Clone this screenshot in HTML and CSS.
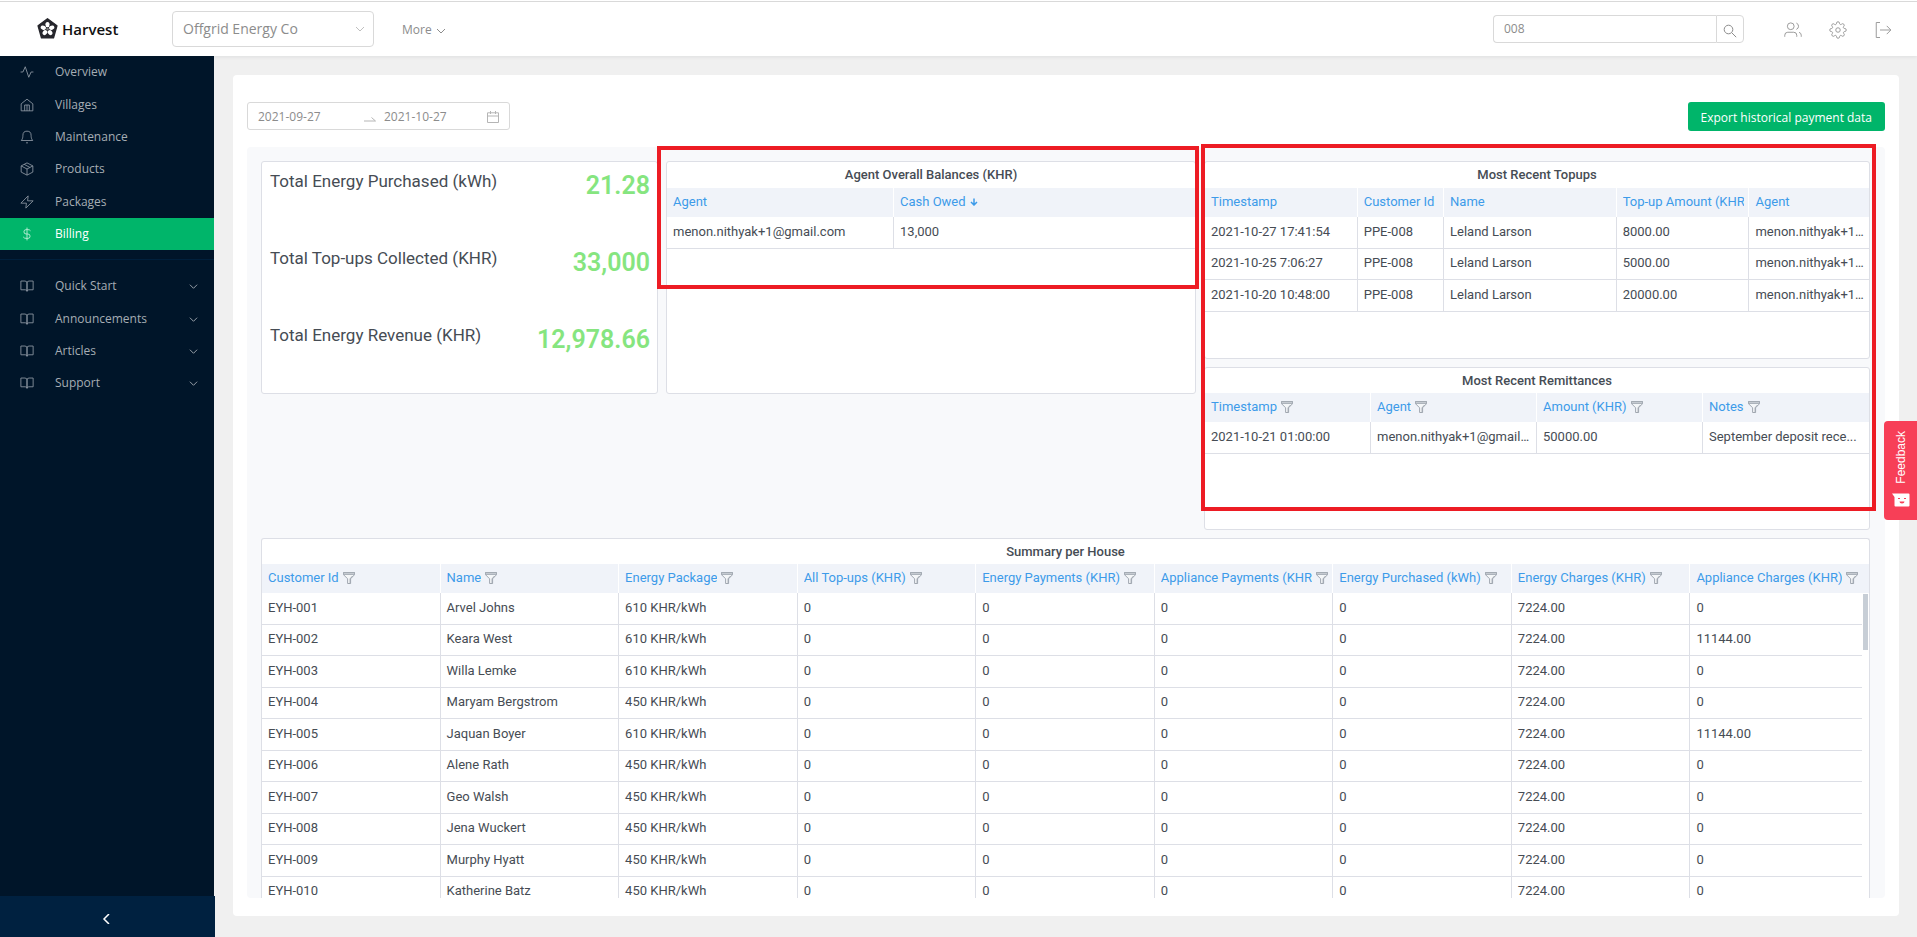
FILE: index.html
```html
<!DOCTYPE html>
<html lang="en">
<head>
<meta charset="utf-8">
<title>Harvest - Billing</title>
<link rel="stylesheet" href="styles.css">
</head>
<body>
<svg class="sprite" width="0" height="0" aria-hidden="true">
  <defs>
    <symbol id="i-filter" viewBox="0 0 12 12">
      <path d="M.5.5h11v2.200L7.600 6.800v4.700H4.600V6.800L.5 2.700z" fill="#f4f6f8" stroke="#a0a7b0" stroke-linejoin="round"/>
      <path d="M.5.5h11v2H.5z" fill="#c5cad1" stroke="#a0a7b0" stroke-width=".8"/>
      <path d="M6.600 6.800v4.600h.9V6.800l2.700-2.900H9z" fill="#a0a7b0"/>
    </symbol>
    <symbol id="i-book" viewBox="0 0 24 24"><path d="M1.500 3.500h7A3.500 3.500 0 0 1 12 7v14a3 3 0 0 0-3-2.500H1.500zM22.500 3.500h-7A3.500 3.500 0 0 0 12 7v14a3 3 0 0 1 3-2.500h7.500z"/></symbol>
    <symbol id="i-down" viewBox="0 0 10 10"><path d="M1 3l4 4 4-4"/></symbol>
  </defs>
</svg>

<header class="topbar">
  <a class="brand" href="#">
    <svg class="brand-mark" viewBox="0 0 21 21" aria-hidden="true">
      <path d="M10.500.8l9.400 6.900-3.400 12.100H4.500L1.100 7.700z" fill="#26262c" stroke="#26262c" stroke-width="1.400" stroke-linejoin="round"/>
      <g fill="#fff">
        <ellipse cx="10.500" cy="6.600" rx="2.100" ry="2.700"/>
        <ellipse cx="10.500" cy="6.600" rx="2.100" ry="2.700" transform="rotate(72 10.500 11)"/>
        <ellipse cx="10.500" cy="6.600" rx="2.100" ry="2.700" transform="rotate(144 10.500 11)"/>
        <ellipse cx="10.500" cy="6.600" rx="2.100" ry="2.700" transform="rotate(216 10.500 11)"/>
        <ellipse cx="10.500" cy="6.600" rx="2.100" ry="2.700" transform="rotate(288 10.500 11)"/>
      </g>
      <circle cx="10.500" cy="11" r="1.300" fill="#777"/>
    </svg>
    <span>Harvest</span>
  </a>
  <div class="org">
    <select class="org-select" aria-label="Organisation"><option>Offgrid Energy Co</option></select>
    <svg class="org-arrow" aria-hidden="true"><use href="#i-down"/></svg>
  </div>
  <button class="more" type="button">More <svg class="more-arrow" aria-hidden="true"><use href="#i-down"/></svg></button>
  <form class="search">
    <input class="search-input" type="text" value="008" aria-label="Search">
    <button class="search-btn" type="button" aria-label="Search">
      <svg viewBox="0 0 14 14"><circle cx="5.500" cy="5.500" r="4.300"/><path d="M8.700 8.700l4.500 4.500"/></svg>
    </button>
  </form>
  <nav class="tools">
    <button type="button" aria-label="Users"><svg viewBox="0 0 24 24"><circle cx="9" cy="7" r="4.500"/><path d="M1 21v-2a4 4 0 0 1 4-4h8a4 4 0 0 1 4 4v2M16.500 2.800a4.500 4.500 0 0 1 0 8.400M23 21v-2a4 4 0 0 0-3-3.900"/></svg></button>
    <button type="button" aria-label="Settings"><svg viewBox="0 0 24 24"><circle cx="12" cy="12" r="3"/><path d="M19.400 15a1.650 1.650 0 0 0 .33 1.820l.06.06a2 2 0 1 1-2.830 2.830l-.06-.06a1.650 1.650 0 0 0-2.800 1.170V21a2 2 0 0 1-4 0v-.09a1.650 1.650 0 0 0-2.900-1.200l-.06.06a2 2 0 1 1-2.830-2.830l.06-.06a1.650 1.650 0 0 0-1.170-2.800H3a2 2 0 0 1 0-4h.09a1.650 1.650 0 0 0 1.200-2.900l-.06-.06a2 2 0 1 1 2.830-2.830l.06.06a1.650 1.650 0 0 0 2.880-1.350V3a2 2 0 0 1 4 0v.09a1.650 1.650 0 0 0 2.800 1.200l.06-.06a2 2 0 1 1 2.830 2.830l-.06.06a1.650 1.650 0 0 0 1.370 2.880H21a2 2 0 0 1 0 4h-.09a1.650 1.650 0 0 0-1.510 1z"/></svg></button>
    <button type="button" aria-label="Log out"><svg viewBox="0 0 24 24"><path d="M8 2H3v20h5M8 12h14M17 6.500l5.500 5.500-5.500 5.500"/></svg></button>
  </nav>
</header>

<div class="body">
  <aside class="sidebar">
    <ul class="menu">
      <li><a href="#"><svg viewBox="0 0 24 24"><path d="M1 12h4l4-9 6 18 4-9h4"/></svg>Overview</a></li>
      <li><a href="#"><svg viewBox="0 0 24 24"><path d="M2 10l10-8 10 8v12H2zM8 22V12h8v10M12 12v10"/></svg>Villages</a></li>
      <li><a href="#"><svg viewBox="0 0 24 24"><path d="M19 9A7 7 0 0 0 5 9c0 7-3 9-3 9h20s-3-2-3-9M10.300 22h3.400"/></svg>Maintenance</a></li>
      <li><a href="#"><svg viewBox="0 0 24 24"><path d="M12 1.500l10 5.200v10.600l-10 5.200-10-5.200V6.700zM2 6.700l10 5.300 10-5.300M12 12v10.500M7 4l10 5.300"/></svg>Products</a></li>
      <li><a href="#"><svg viewBox="0 0 24 24"><path d="M14 1.500L1.500 14h9.500l-1 8.500L22.500 10H13z"/></svg>Packages</a></li>
      <li><a class="active" href="#"><svg viewBox="0 0 24 24"><path d="M12 1v22M18 6.500C17 5 15.500 4.500 13.500 4.500h-3a3.700 3.700 0 0 0 0 7.500h3a3.700 3.700 0 0 1 0 7.500h-3c-2.500 0-4-1-5-2.500"/></svg>Billing</a></li>
    </ul>
    <ul class="menu menu-more">
      <li><a href="#"><svg><use href="#i-book"/></svg>Quick Start<svg class="caret"><use href="#i-down"/></svg></a></li>
      <li><a href="#"><svg><use href="#i-book"/></svg>Announcements<svg class="caret"><use href="#i-down"/></svg></a></li>
      <li><a href="#"><svg><use href="#i-book"/></svg>Articles<svg class="caret"><use href="#i-down"/></svg></a></li>
      <li><a href="#"><svg><use href="#i-book"/></svg>Support<svg class="caret"><use href="#i-down"/></svg></a></li>
    </ul>
    <button class="collapse" type="button" aria-label="Collapse menu"><svg viewBox="0 0 10 10"><path d="M7 0L2 5l5 5"/></svg></button>
  </aside>

  <main class="content">
    <div class="card">
      <div class="toolbar">
        <div class="range">
          <input type="text" value="2021-09-27" aria-label="Start date">
          <svg class="range-arrow" viewBox="0 0 12 6"><path d="M0 5h11.500L7.500 1.500"/></svg>
          <input type="text" value="2021-10-27" aria-label="End date">
          <svg class="range-cal" viewBox="0 0 12 12"><path d="M.5 1.800h11v9.700H.5zM.5 5h11M3.500 0v3M8.500 0v3"/></svg>
        </div>
        <button class="export" type="button">Export historical payment data</button>
      </div>

      <div class="dashboard">
        <div class="upper">
          <section class="panel stats">
            <div class="stat"><span>Total Energy Purchased (kWh)</span><strong>21.28</strong></div>
            <div class="stat"><span>Total Top-ups Collected (KHR)</span><strong>33,000</strong></div>
            <div class="stat"><span>Total Energy Revenue (KHR)</span><strong>12,978.66</strong></div>
          </section>

          <div class="marked marked-agent">
            <section class="panel agent">
              <h2>Agent Overall Balances (KHR)</h2>
              <table>
                <colgroup><col class="w-agent"><col></colgroup>
                <thead><tr><th><div>Agent</div></th><th><div>Cash Owed <svg class="sort" viewBox="0 0 8 8"><path d="M4 .5v6.500M1 4l3 3 3-3"/></svg></div></th></tr></thead>
                <tbody><tr><td>menon.nithyak+1@gmail.com</td><td>13,000</td></tr></tbody>
              </table>
            </section>
          </div>

          <div class="marked marked-recent">
            <section class="panel topups">
              <h2>Most Recent Topups</h2>
              <table>
                <colgroup><col class="w-time"><col class="w-cust"><col class="w-name"><col class="w-amount"><col></colgroup>
                <thead><tr><th><div>Timestamp</div></th><th><div>Customer Id</div></th><th><div>Name</div></th><th><div><span>Top-up Amount (KHR</span></div></th><th><div>Agent</div></th></tr></thead>
                <tbody>
                  <tr><td>2021-10-27 17:41:54</td><td>PPE-008</td><td>Leland Larson</td><td>8000.00</td><td>menon.nithyak+1...</td></tr>
                  <tr><td>2021-10-25 7:06:27</td><td>PPE-008</td><td>Leland Larson</td><td>5000.00</td><td>menon.nithyak+1...</td></tr>
                  <tr><td>2021-10-20 10:48:00</td><td>PPE-008</td><td>Leland Larson</td><td>20000.00</td><td>menon.nithyak+1...</td></tr>
                </tbody>
              </table>
            </section>
            <section class="panel remittances">
              <h2>Most Recent Remittances</h2>
              <table>
                <thead><tr><th><div><span>Timestamp</span><svg><use href="#i-filter"/></svg></div></th><th><div><span>Agent</span><svg><use href="#i-filter"/></svg></div></th><th><div><span>Amount (KHR)</span><svg><use href="#i-filter"/></svg></div></th><th><div><span>Notes</span><svg><use href="#i-filter"/></svg></div></th></tr></thead>
                <tbody><tr><td>2021-10-21 01:00:00</td><td>menon.nithyak+1@gmail....</td><td>50000.00</td><td>September deposit rece...</td></tr></tbody>
              </table>
            </section>
          </div>
        </div>

        <section class="panel summary">
          <h2>Summary per House</h2>
          <div class="scroller">
            <table>
              <thead><tr>
                <th><div><span>Customer Id</span><svg><use href="#i-filter"/></svg></div></th>
                <th><div><span>Name</span><svg><use href="#i-filter"/></svg></div></th>
                <th><div><span>Energy Package</span><svg><use href="#i-filter"/></svg></div></th>
                <th><div><span>All Top-ups (KHR)</span><svg><use href="#i-filter"/></svg></div></th>
                <th><div><span>Energy Payments (KHR)</span><svg><use href="#i-filter"/></svg></div></th>
                <th><div><span>Appliance Payments (KHR)</span><svg><use href="#i-filter"/></svg></div></th>
                <th><div><span>Energy Purchased (kWh)</span><svg><use href="#i-filter"/></svg></div></th>
                <th><div><span>Energy Charges (KHR)</span><svg><use href="#i-filter"/></svg></div></th>
                <th><div><span>Appliance Charges (KHR)</span><svg><use href="#i-filter"/></svg></div></th>
              </tr></thead>
              <tbody>
                <tr><td>EYH-001</td><td>Arvel Johns</td><td>610 KHR/kWh</td><td>0</td><td>0</td><td>0</td><td>0</td><td>7224.00</td><td>0</td></tr>
                <tr><td>EYH-002</td><td>Keara West</td><td>610 KHR/kWh</td><td>0</td><td>0</td><td>0</td><td>0</td><td>7224.00</td><td>11144.00</td></tr>
                <tr><td>EYH-003</td><td>Willa Lemke</td><td>610 KHR/kWh</td><td>0</td><td>0</td><td>0</td><td>0</td><td>7224.00</td><td>0</td></tr>
                <tr><td>EYH-004</td><td>Maryam Bergstrom</td><td>450 KHR/kWh</td><td>0</td><td>0</td><td>0</td><td>0</td><td>7224.00</td><td>0</td></tr>
                <tr><td>EYH-005</td><td>Jaquan Boyer</td><td>610 KHR/kWh</td><td>0</td><td>0</td><td>0</td><td>0</td><td>7224.00</td><td>11144.00</td></tr>
                <tr><td>EYH-006</td><td>Alene Rath</td><td>450 KHR/kWh</td><td>0</td><td>0</td><td>0</td><td>0</td><td>7224.00</td><td>0</td></tr>
                <tr><td>EYH-007</td><td>Geo Walsh</td><td>450 KHR/kWh</td><td>0</td><td>0</td><td>0</td><td>0</td><td>7224.00</td><td>0</td></tr>
                <tr><td>EYH-008</td><td>Jena Wuckert</td><td>450 KHR/kWh</td><td>0</td><td>0</td><td>0</td><td>0</td><td>7224.00</td><td>0</td></tr>
                <tr><td>EYH-009</td><td>Murphy Hyatt</td><td>450 KHR/kWh</td><td>0</td><td>0</td><td>0</td><td>0</td><td>7224.00</td><td>0</td></tr>
                <tr><td>EYH-010</td><td>Katherine Batz</td><td>450 KHR/kWh</td><td>0</td><td>0</td><td>0</td><td>0</td><td>7224.00</td><td>0</td></tr>
              </tbody>
            </table>
            <div class="track"><div class="thumb"></div></div>
          </div>
        </section>
      </div>
    </div>
  </main>
</div>

<button class="feedback" type="button">
  <span>Feedback</span>
  <svg viewBox="0 0 18 14" aria-hidden="true"><path d="M0 .5h16.500a1 1 0 0 1 1 1v11a1 1 0 0 1-1 1H3.500a1 1 0 0 1-1-1V4z" fill="#fff"/><path d="M6 5.500h2M12 5.500h2" stroke="#f73f57" stroke-width="1.200"/><path d="M7.500 8.500h5a2.500 2 0 0 1-5 0z" fill="#f73f57"/></svg>
</button>
</body>
</html>
```

FILE: styles.css
```css
*, *::before, *::after { box-sizing: border-box; }

body {
  margin: 0;
  height: 100vh;
  display: flex;
  flex-direction: column;
  overflow: hidden;
  background: #f0f0f0;
  color: #464c54;
  font: 13px/20px Roboto, "Liberation Sans", sans-serif;
}

button, input, select { font: inherit; color: inherit; margin: 0; }
button { cursor: pointer; background: none; border: 0; padding: 0; }
a { color: inherit; text-decoration: none; }
svg { fill: none; stroke: currentColor; flex: none; }
.sprite { position: absolute; }

/* Top bar */
.topbar {
  height: 55px;
  margin-top: 1px;
  flex: none;
  display: flex;
  align-items: center;
  padding: 1px 25px 0 37px;
  background: #fff;
  border-top: 1px solid #d9d9d9;
  box-shadow: 0 -1px 0 #fff, 0 1px 4px rgba(0, 21, 41, .08);
  position: relative;
  z-index: 1;
  color: #8c8c8c;
  font-family: "Open Sans", "Noto Sans", sans-serif;
}
.brand {
  width: 135px;
  display: flex;
  align-items: center;
  gap: 4px;
  margin-bottom: 2px;
  color: #111;
  font-size: 15px;
  font-weight: 600;
}
.brand-mark { width: 21px; height: 21px; stroke: none; }
.org { position: relative; width: 202px; margin-bottom: 2px; }
.org-select {
  appearance: none;
  width: 100%;
  height: 36px;
  padding: 0 10px;
  border: 1px solid #d9d9d9;
  border-radius: 4px;
  background: #fff;
  font-size: 14px;
}
.org-arrow { position: absolute; right: 9px; top: 13px; width: 10px; height: 10px; color: #bfbfbf; }
.more { display: flex; align-items: center; gap: 4px; margin-left: 28px; font-size: 12px; }
.more-arrow { width: 10px; height: 10px; margin-top: 3px; }
.search { display: flex; width: 251px; margin-left: auto; margin-bottom: 2px; }
.search-input {
  flex: 1;
  min-width: 0;
  height: 28px;
  padding: 0 10px;
  border: 1px solid #d9d9d9;
  border-right: 0;
  border-radius: 4px 0 0 4px;
  font-size: 12px;
}
.search-btn {
  width: 28px;
  height: 28px;
  padding-top: 4px;
  display: grid;
  place-items: center;
  border: 1px solid #d9d9d9;
  border-radius: 0 4px 4px 0;
}
.search-btn svg { width: 14px; height: 14px; }
.tools { display: flex; gap: 27px; margin-left: 40px; color: #999; }
.tools button { display: grid; }
.tools svg { width: 18px; height: 18px; stroke-width: 1.3; }

/* Sidebar */
.body { flex: 1; min-height: 0; display: flex; }
.sidebar {
  width: 214px;
  flex: none;
  display: flex;
  flex-direction: column;
  background: #001529;
  color: #a6adb4;
  font-family: "Open Sans", "Noto Sans", sans-serif;
  font-size: 12px;
}
.menu { list-style: none; margin: 0; padding: 0; }
.menu li:nth-child(3n + 2) { margin-top: 1px; }
.menu a { display: flex; align-items: center; height: 32px; padding: 0 16px 0 20px; }
.menu a > svg:first-child { width: 14px; height: 14px; margin-right: 21px; color: #8b96a1; stroke-width: 1.5; }
.menu .active { background: #00b56a; color: #fff; }
.menu .active > svg:first-child { color: #c4f0dc; }
.menu-more { margin-top: 9px; padding-top: 10px; border-top: 1px solid #00203c; }
.menu .caret { width: 9px; height: 9px; margin-left: auto; }
.collapse {
  height: 41px;
  width: 215px;
  margin-top: auto;
  flex: none;
  display: grid;
  place-items: center;
  padding: 5px 2px 0 0;
  background: #002140;
  color: #fff;
}
.collapse svg { width: 10px; height: 10px; stroke-width: 1.5; }

/* Content */
.content { flex: 1; min-width: 0; display: flex; padding: 19px 18px 21px 19px; }
.card {
  flex: 1;
  min-width: 0;
  display: flex;
  flex-direction: column;
  padding: 27px 14px 18px;
  background: #fff;
  border-radius: 4px;
}
.toolbar {
  display: flex;
  justify-content: space-between;
  align-items: flex-start;
  height: 45px;
  font-family: "Open Sans", "Noto Sans", sans-serif;
  font-size: 12px;
}
.range {
  width: 263px;
  height: 28px;
  display: flex;
  align-items: center;
  padding: 1px 10px 0;
  border: 1px solid #d9d9d9;
  border-radius: 3px;
  color: #8c8c8c;
}
.range input { width: 98px; min-width: 0; border: 0; padding: 0; background: none; }
.range svg { color: #b5b5b5; }
.range-arrow { width: 12px; height: 6px; margin: 4px 8px 0 8px; }
.range-cal { width: 12px; height: 12px; margin-left: auto; }
.export {
  height: 29px;
  padding: 2px 13px 0;
  border-radius: 3px;
  background: #00b56a;
  color: #fff;
}

/* Dashboard */
.dashboard {
  flex: 1;
  min-height: 0;
  display: flex;
  flex-direction: column;
  gap: 8px;
  padding: 14px 15px 0 14px;
  background: #f8f9fb;
  border-radius: 4px;
}
.upper {
  flex: none;
  display: grid;
  grid-template-columns: 397fr 530fr 666fr;
  gap: 8px;
  align-items: start;
}
.panel {
  background: #fff;
  border: 1px solid #dddfe6;
  border-radius: 3px;
  overflow: hidden;
}
.panel h2 {
  margin: 0;
  font-size: 13px;
  font-weight: 500;
  line-height: 25px;
  text-align: center;
}
.agent h2, .topups h2 { line-height: 26px; }
.stats, .agent { height: 233px; }
.topups { height: 198px; }
.remittances { height: 163px; margin-top: 8px; }

.stats { display: grid; grid-template-rows: repeat(3, 1fr); }
.stat { display: flex; justify-content: space-between; padding: 7px 7px 0 8px; }
.stat span { font-size: 17px; line-height: 24px; }
.stat strong { font-size: 25px; line-height: 34px; font-weight: 600; color: #86e57f; }

/* Highlight frames drawn over the panels */
.marked { position: relative; min-width: 0; }
.marked::after { content: ""; position: absolute; border: 4px solid #ed1c24; pointer-events: none; }
.marked-agent::after { left: -9px; right: -3px; top: -15px; height: 143px; }
.marked-recent::after { left: -3px; right: -6px; top: -17px; bottom: 19px; }

/* Tables */
table { width: 100%; table-layout: fixed; border-collapse: separate; border-spacing: 0; }
th, td { padding: 0 4px 2px 6px; text-align: left; white-space: nowrap; overflow: hidden; }
th {
  height: 29px;
  background: #f0f3f9;
  border-right: 1px solid #fff;
  color: #3d9be9;
  font-weight: 400;
}
th div { display: flex; align-items: center; gap: 4px; overflow: hidden; }
th span { overflow: hidden; }
th svg { width: 12px; height: 12px; stroke: none; }
th .sort { width: 8px; height: 8px; stroke: currentColor; stroke-width: 1.5; }
td {
  height: 32px;
  border-right: 1px solid #dddfe6;
  border-bottom: 1px solid #dddfe6;
  text-overflow: ellipsis;
}
tr:nth-child(even) td { height: 31px; }
th:last-child, td:last-child { border-right: 0; }
.w-agent { width: 43%; }
.w-time { width: 23%; }
.w-cust { width: 13%; }
.w-name { width: 26%; }
.w-amount { width: 20%; }

.summary { flex: 1; min-height: 0; border-bottom: 0; border-radius: 3px 3px 0 0; }
.scroller { position: relative; }
.track { position: absolute; top: 29px; right: 0; bottom: 0; width: 7px; padding: 1px 1px 0 1px; background: #fff; }
.thumb { height: 56px; background: #c7ced6; }

/* Feedback tab */
.feedback {
  position: fixed;
  right: 0;
  top: 421px;
  width: 33px;
  height: 99px;
  display: flex;
  flex-direction: column;
  align-items: center;
  justify-content: space-between;
  padding: 10px 0 13px;
  border-radius: 4px 0 0 4px;
  background: #f73f57;
  color: #fff;
  font: 12px/16px "Liberation Sans", sans-serif;
  z-index: 2;
}
.feedback span { writing-mode: vertical-rl; transform: rotate(180deg); }
.feedback svg { width: 18px; height: 14px; stroke: none; }
```
